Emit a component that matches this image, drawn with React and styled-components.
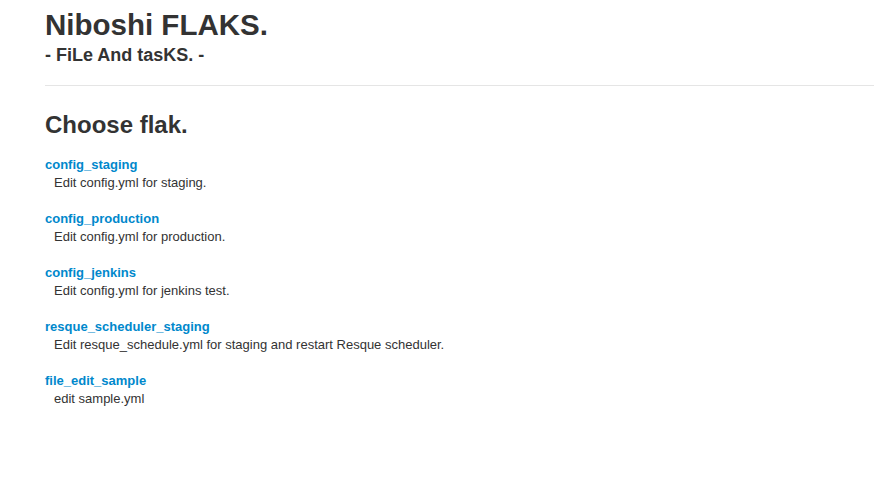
import React from 'react';
import styled, { createGlobalStyle } from 'styled-components';

const GlobalStyle = createGlobalStyle`
    body {
        margin: 0;
        background: #fff;
        color: #333;
        font-family: "Liberation Sans", Arial, Helvetica, sans-serif;
        font-size: 13px;
        line-height: 18px;
    }
`;

const Page = styled.div`
    padding-left: 45px;
`;

const Header = styled.header`
    padding-top: 7px;
`;

const Title = styled.h1`
    margin: 0;
    font-size: 29.5px;
    line-height: 36px;
    font-weight: bold;
    color: #333;
`;

const Subtitle = styled.div`
    font-size: 18px;
    line-height: 24px;
    font-weight: bold;
    color: #333;
`;

const Rule = styled.hr`
    margin: 18px 0 0;
    border: 0;
    border-top: 1px solid #e5e5e5;
    height: 0;
`;

const Heading = styled.h2`
    margin: 24px 0 16px;
    font-size: 24px;
    line-height: 30px;
    font-weight: bold;
    color: #333;
`;

const FlakList = styled.dl`
    margin: 0;
`;

const Item = styled.div`
    margin-bottom: 18px;
`;

const Name = styled.dt`
    font-weight: bold;
    a {
        color: #0088cc;
        text-decoration: none;
    }
`;

const Desc = styled.dd`
    margin-left: 9px;
`;

const flaks = [
    { name: 'config_staging', desc: 'Edit config.yml for staging.' },
    { name: 'config_production', desc: 'Edit config.yml for production.' },
    { name: 'config_jenkins', desc: 'Edit config.yml for jenkins test.' },
    { name: 'resque_scheduler_staging', desc: 'Edit resque_schedule.yml for staging and restart Resque scheduler.' },
    { name: 'file_edit_sample', desc: 'edit sample.yml' },
];

export default function App() {
    return (
        <Page>
            <GlobalStyle />
            <Header>
                <Title>Niboshi FLAKS.</Title>
                <Subtitle>- FiLe And tasKS. -</Subtitle>
            </Header>
            <Rule />
            <Heading>Choose flak.</Heading>
            <FlakList>
                {flaks.map((f) => (
                    <Item key={f.name}>
                        <Name><a href={`#${f.name}`}>{f.name}</a></Name>
                        <Desc>{f.desc}</Desc>
                    </Item>
                ))}
            </FlakList>
        </Page>
    );
}
